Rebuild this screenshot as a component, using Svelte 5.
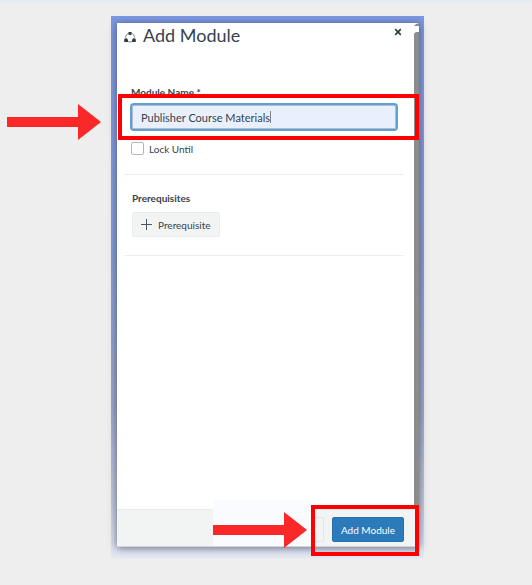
<script lang="ts">
  let moduleName = $state("Publisher Course Materials");
  let lockUntil = $state(false);
</script>

<main class="page">
  <div class="backdrop">
    <div class="dialog" role="dialog" aria-labelledby="dialog-title">
      <header class="header">
        <svg class="logo" viewBox="0 0 12 12" aria-hidden="true">
          <g fill="none" stroke="#7b8790" stroke-width="1">
            <path d="M4 2.5A4.6 4.6 0 0 0 1.4 6.6M8 2.5a4.6 4.6 0 0 1 2.6 4.1M4 10.6a4.8 4.8 0 0 0 4 0" />
          </g>
          <g fill="#2d3b45">
            <path d="M4.4 1h3.2v2.2l-.6.8H5l-.6-.8z" />
            <path d="M.6 7.6l2.1-.4 1.3 1.5v2.4H.2V8.9z" />
            <path d="M11.4 7.6l-2.1-.4L8 8.7v2.4h3.8V8.9z" />
          </g>
        </svg>
        <h1 id="dialog-title">Add Module</h1>
        <button class="close" type="button" aria-label="Close">
          <svg viewBox="0 0 8 8" aria-hidden="true">
            <path d="M1.2 1.2l5.6 5.6M6.8 1.2L1.2 6.8" fill="none" stroke="#2d3b45" stroke-width="1.7" />
          </svg>
        </button>
      </header>

      <div class="body">
        <label class="label" for="module-name">Module Name *</label>
        <div class="field">
          <input id="module-name" class="text-input" type="text" bind:value={moduleName} />
          <span class="caret" aria-hidden="true"><span class="caret-text">{moduleName}</span></span>
          <span class="highlight highlight--field"></span>
          <svg class="arrow arrow--field" viewBox="0 0 94 38" aria-hidden="true">
            <path d="M0 14h71V1l23 18-23 18V24H0z" fill="#fa2828" />
          </svg>
        </div>

        <label class="check">
          <input type="checkbox" bind:checked={lockUntil} />
          Lock Until
        </label>

        <section class="prerequisites">
          <h2>Prerequisites</h2>
          <button class="add" type="button">
            <svg viewBox="0 0 11 11" aria-hidden="true">
              <path d="M5.5 0v11M0 5.5h11" stroke="#4a5660" stroke-width="1" />
            </svg>
            Prerequisite
          </button>
        </section>
      </div>

      <footer class="footer">
        <button class="cancel" type="button" aria-label="Cancel"></button>
        <button class="submit" type="button">Add Module</button>
        <span class="patch"></span>
        <span class="highlight highlight--submit"></span>
        <svg class="arrow arrow--submit" viewBox="0 0 94 38" aria-hidden="true">
          <path d="M0 14h71V1l23 18-23 18V24H0z" fill="#fa2828" />
        </svg>
      </footer>

      <div class="scrollbar">
        <svg viewBox="0 0 5 9" aria-hidden="true">
          <path d="M5 0v3H0q1-2 5-3z" fill="#8c8c8c" />
        </svg>
        <span class="thumb"></span>
      </div>
    </div>
  </div>
</main>

<style>
  :global(body) {
    margin: 0;
    background: #eeeeee;
  }

  .page {
    padding: 13px 108px 28px 111px;
    border-top: 3px solid #e8eaf1;
    font-family: Lato, "Liberation Sans", sans-serif;
    font-size: 10px;
    line-height: 14px;
    color: #36434d;
  }

  .page * {
    box-sizing: border-box;
  }

  .backdrop {
    padding: 7px 5px 11px 6px;
    background: linear-gradient(#7d98e4, #869dd4 45%, #9aa8cc 72%, #c4cadc 90%, #e4e8f6);
  }

  .dialog {
    position: relative;
    display: flex;
    flex-direction: column;
    background: #ffffff;
    box-shadow: 0 1px 8px rgba(50, 55, 80, 0.7);
  }

  /* Header */
  .header {
    display: flex;
    align-items: flex-start;
    gap: 7px;
    height: 62px;
    padding: 0 17px 0 7px;
  }

  .logo {
    width: 12px;
    height: 12px;
    margin-top: 8px;
  }

  h1 {
    flex: 1;
    margin: 0;
    font-size: 18px;
    font-weight: 400;
    line-height: 24px;
  }

  .close {
    display: flex;
    margin-top: 5px;
    padding: 0;
    border: none;
    background: transparent;
  }

  .close svg {
    width: 8px;
    height: 8px;
  }

  /* Body */
  .body {
    min-height: 424px;
    padding: 0 15px 0 7px;
  }

  .label {
    display: block;
    margin-left: 7px;
    font-weight: 700;
  }

  .field {
    position: relative;
    margin: 4px 6px 11px;
  }

  .text-input {
    display: block;
    width: 100%;
    height: 28px;
    padding: 0 9px;
    border: 2px solid #62a0d2;
    border-radius: 4px;
    outline: none;
    background: #e8effd;
    box-shadow: inset 0 0 0 1px #b4bcc8;
    font: inherit;
    font-size: 11px;
    color: #36434d;
  }

  .caret {
    position: absolute;
    top: 8px;
    left: 11px;
    height: 12px;
    border-right: 1px solid #7a8590;
    font-size: 11px;
    pointer-events: none;
  }

  .caret-text {
    visibility: hidden;
  }

  .check {
    display: flex;
    align-items: center;
    gap: 5px;
    margin-left: 7px;
    line-height: 12px;
  }

  .check input {
    appearance: none;
    width: 13px;
    height: 13px;
    margin: 0;
    border: 1px solid #b0b7bd;
    border-radius: 2px;
    background: #ffffff;
  }

  .check input:checked {
    background: #2d3b45;
  }

  .prerequisites {
    margin-top: 19px;
    padding: 16px 8px 18px;
    border-top: 1px solid #eeeeee;
    border-bottom: 1px solid #eeeeee;
  }

  h2 {
    margin: 0 0 7px;
    font-size: 10px;
    font-weight: 700;
    line-height: 14px;
  }

  .add {
    display: flex;
    align-items: center;
    gap: 6px;
    height: 25px;
    padding: 0 8px;
    border: 1px solid #e9ebec;
    border-radius: 2px;
    background: #f2f4f4;
    font: inherit;
    color: #36434d;
  }

  .add svg {
    width: 11px;
    height: 11px;
  }

  /* Footer */
  .footer {
    position: relative;
    display: flex;
    justify-content: flex-end;
    gap: 8px;
    padding: 7px 15px 4px;
    border-top: 1px solid #e9ebeb;
    border-bottom: 1px solid #d2d6dc;
    background: #f1f4f3;
  }

  .cancel {
    width: 48px;
    border: 1px solid #e3e6e6;
    border-radius: 2px;
    background: #f2f4f4;
  }

  .submit {
    height: 25px;
    padding: 0 8px;
    border: 1px solid #2672ae;
    border-radius: 2px;
    background: #2b7abc;
    font: inherit;
    color: #ffffff;
  }

  .scrollbar {
    position: absolute;
    top: 0;
    right: 0;
    bottom: 38px;
    display: flex;
    flex-direction: column;
    width: 5px;
  }

  .scrollbar svg {
    width: 5px;
    height: 9px;
  }

  .thumb {
    flex: 1;
    border-top-left-radius: 3px;
    background: #8c8c8c;
  }

  /* Callouts drawn over the dialog */
  .highlight {
    position: absolute;
    z-index: 1;
    border: 4px solid #ff0000;
    pointer-events: none;
  }

  .highlight--field {
    inset: -9px -21px -9px -12px;
  }

  .highlight--submit {
    top: -5px;
    right: 0;
    bottom: -10px;
    width: 108px;
  }

  .arrow {
    position: absolute;
    z-index: 1;
    width: 94px;
    height: 38px;
  }

  .arrow--field {
    top: 0;
    left: -123px;
  }

  .arrow--submit {
    top: 1px;
    right: 112px;
  }

  .patch {
    position: absolute;
    top: -10px;
    right: 108px;
    bottom: 0;
    width: 98px;
    background: #fafbff;
  }
</style>
